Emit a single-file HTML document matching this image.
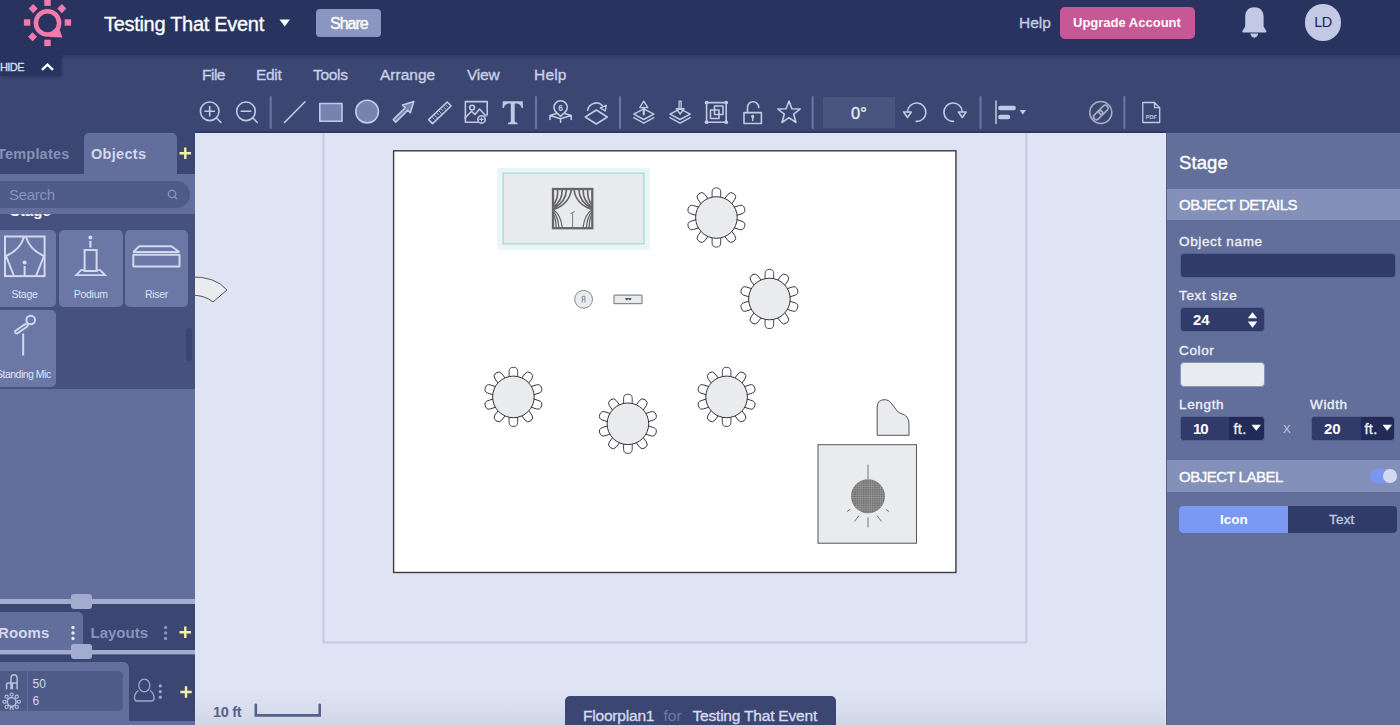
<!DOCTYPE html>
<html><head><meta charset="utf-8">
<style>
*{margin:0;padding:0;box-sizing:border-box}
html,body{width:1400px;height:725px;overflow:hidden;background:#dfe4f5;font-family:"Liberation Sans",sans-serif}
.a{position:absolute}
.t{position:absolute;white-space:nowrap;line-height:1}
.m{-webkit-text-stroke:0.35px currentColor}
#hdr{left:0;top:0;width:1400px;height:55px;background:#283360}
#tb{left:0;top:55px;width:1400px;height:78px;background:#3b4772}
#tbline{left:195px;top:131px;width:971px;height:2px;background:#2e3866}
#side{left:0;top:133px;width:195px;height:592px;background:#626e9b}
#canvas{left:195px;top:133px;width:970px;height:592px;background:#dfe4f5;overflow:hidden}
#rp{left:1166px;top:132.5px;width:234px;height:592.5px;background:#636f9b;border-left:1px solid #535e8c}
</style></head><body>
<div id="hdr" class="a"></div>

<!-- HEADER -->
<svg class="a" style="left:20px;top:0px" width="56" height="50" viewBox="20 0 56 50">
 <g fill="#f27ba9">
  <rect x="44.3" y="-0.5" width="6.4" height="6.4"/>
  <rect x="44.3" y="39.7" width="6.4" height="6.4"/>
  <rect x="23.9" y="19.3" width="6.4" height="6.4"/>
  <rect x="64.7" y="19.3" width="6.4" height="6.4"/>
  <rect x="30" y="5.4" width="6.4" height="6.4" transform="rotate(45 33.2 8.6)"/>
  <rect x="58.6" y="5.4" width="6.4" height="6.4" transform="rotate(45 61.8 8.6)"/>
  <rect x="29.3" y="33.6" width="6.4" height="6.4" transform="rotate(45 32.5 36.8)"/>
 </g>
 <circle cx="47.5" cy="22.9" r="11.6" fill="none" stroke="#f27ba9" stroke-width="4.6"/>
 <path d="M58.8 27.5 L62.5 37.5 L49.5 36.9 L49.5 32.6 L56.7 31.6 Z" fill="#f27ba9"/>
</svg>
<div class="t m" style="left:104px;top:14px;font-size:20px;color:#fff;letter-spacing:-0.3px">Testing That Event</div>
<svg class="a" style="left:279px;top:19px" width="12" height="8"><path d="M0.5 0.5 H11 L5.75 7.5Z" fill="#fff"/></svg>
<div class="a" style="left:316px;top:9px;width:65px;height:28px;border-radius:4px;background:#8b96c0"></div>
<div class="t m" style="left:330px;top:16px;font-size:16px;color:#fff;letter-spacing:-1px">Share</div>
<div class="t m" style="left:1019px;top:15px;font-size:15.5px;color:#c4cae6">Help</div>
<div class="a" style="left:1060px;top:7px;width:135px;height:32px;border-radius:5px;background:#c75896"></div>
<div class="t" style="left:1073px;top:16px;font-size:13px;font-weight:bold;color:#fff">Upgrade Account</div>
<svg class="a" style="left:1240px;top:5px" width="30" height="36" viewBox="1240 5 30 36">
 <path d="M1254.3 7.3 C1248 7.3 1245.2 11.5 1245.2 17 L1245.2 26.5 L1242.4 31 Q1242 32.6 1243.6 32.6 L1265.2 32.6 Q1266.8 32.6 1266.4 31 L1263.6 26.5 L1263.6 17 C1263.6 11.5 1260.6 7.3 1254.3 7.3Z" fill="#c3c9e4"/>
 <path d="M1250.4 33.6 Q1251 37.7 1254.3 37.7 Q1257.6 37.7 1258.2 33.6Z" fill="#c3c9e4"/>
</svg>
<div class="a" style="left:1304.6px;top:4.1px;width:36.8px;height:36.8px;border-radius:50%;background:#c3c9e4"></div>
<div class="t" style="left:1313px;top:15px;font-size:14.5px;color:#1e2654;width:20px;text-align:center;letter-spacing:-0.5px">LD</div>
<div id="tb" class="a"></div>
<div class="a" style="left:0;top:55px;width:1400px;height:4px;background:linear-gradient(#2f3a68,rgba(59,71,114,0))"></div>
<div id="tbline" class="a"></div>
<!-- TOOLBAR -->
<div class="a" style="left:0;top:54px;width:61px;height:22px;background:#283360;border-radius:0 0 3px 0;box-shadow:1px 1px 3px rgba(20,25,60,0.35)"></div>
<div class="t m" style="left:0px;top:62px;font-size:11px;color:#d6dbef;letter-spacing:-0.6px">HIDE</div>
<svg class="a" style="left:40px;top:62px" width="15" height="10"><path d="M2 7.8 L7.5 2.6 L13 7.8" fill="none" stroke="#fff" stroke-width="2.4"/></svg>
<div class="t m" style="left:202px;top:66.5px;font-size:15.5px;color:#c9cfe9;letter-spacing:-0.5px">File</div>
<div class="t m" style="left:256px;top:66.5px;font-size:15.5px;color:#c9cfe9;letter-spacing:-0.3px">Edit</div>
<div class="t m" style="left:313px;top:66.5px;font-size:15.5px;color:#c9cfe9;letter-spacing:-0.3px">Tools</div>
<div class="t m" style="left:380px;top:66.5px;font-size:15.5px;color:#c9cfe9">Arrange</div>
<div class="t m" style="left:467px;top:66.5px;font-size:15.5px;color:#c9cfe9;letter-spacing:-0.2px">View</div>
<div class="t m" style="left:534px;top:66.5px;font-size:15.5px;color:#c9cfe9;letter-spacing:0.2px">Help</div>
<svg class="a" style="left:0;top:90px" width="1165" height="42" viewBox="0 90 1165 42">
 <g fill="none" stroke="#c3c9e4" stroke-width="1.6" stroke-linecap="round" stroke-linejoin="round">
  <!-- zoom in -->
  <circle cx="209.7" cy="111.3" r="9.3"/><path d="M216.5 118 L221 122.5 M205 111.3 H214.4 M209.7 106.6 V116"/>
  <!-- zoom out -->
  <circle cx="246" cy="111.3" r="9.3"/><path d="M252.8 118 L257.3 122.5 M241.3 111.3 H250.7"/>
  <!-- line -->
  <path d="M284.5 122.5 L305 101.8"/>
  <!-- rect -->
  <rect x="319.8" y="103.5" width="22.2" height="17.7" fill="#7682b0"/>
  <!-- circle -->
  <circle cx="367.1" cy="111.6" r="11.3" fill="#7682b0"/>
  <!-- arrow -->
  <path d="M393.3 119.6 L405.2 107.7 L402.6 105.1 L413.8 101.6 L410.3 112.8 L407.7 110.2 L395.8 122.1 Z" fill="#7682b0"/>
  <!-- ruler -->
  <path d="M428.6 119.6 L447.2 102 L451.1 106 L432.5 123.6 Z"/>
  <path d="M432.6 117.5 l1.5 1.5 M434.8 115.4 l2.3 2.3 M437 113.3 l1.5 1.5 M439.2 111.2 l2.3 2.3 M441.4 109.1 l1.5 1.5 M443.6 107 l2.3 2.3 M445.8 104.9 l1.5 1.5" stroke-width="1"/>
  <!-- image -->
  <path d="M478 122.3 H465.4 V101.6 H487.2 V115"/>
  <circle cx="472.1" cy="107.6" r="2.4"/>
  <path d="M465 118 L471.5 111.3 L475 114.5 L479.5 109 L486 116"/>
  <circle cx="481.5" cy="119.4" r="3.7"/>
  <path d="M479.8 119.4 H483.2 M481.5 117.7 V121.1" stroke-width="1.1"/>
  <!-- separators -->
  <path d="M270.7 97 V128 M536 97 V128 M620 97 V128 M812.7 97 V128 M980.5 97 V128 M1124.4 97 V128" stroke="#6a76a4" stroke-width="2"/>
  <!-- pin -->
  <path d="M556.5 112.5 A6.6 6.6 0 1 1 564.7 112.5 L560.6 116.3 Z"/>
  <path d="M550 119.5 V115.6 L556.5 113.6 M571.2 119.5 V115.6 L564.7 113.6 M550 115.6 L560.6 118.8 L571.2 115.6 M560.6 118.8 V122.3"/>
  <!-- rotate plane -->
  <path d="M585.3 117 L596.3 110 L607.3 117 L596.3 124 Z"/>
  <path d="M587.7 110.3 A8.6 8.6 0 0 1 602.3 105.5"/>
  <path d="M600.3 107.9 L606.2 105.3 L605.2 111 Z" stroke-width="1.4"/>
  <!-- layer up -->
  <path d="M633.8 114.2 L643.8 108.9 L653.9 114.2 L643.8 119.5 Z M633.8 117.7 L643.8 123.2 L653.9 117.7" stroke-width="1.5"/>
  <path d="M643.8 114.3 V107.8" stroke-width="2.2"/>
  <path d="M639.8 107.6 L643.8 101.2 L647.8 107.6 Z" stroke-width="1.4"/>
  <!-- layer down -->
  <path d="M670 114.2 L680.1 108.9 L690.2 114.2 L680.1 119.5 Z M670 117.7 L680.1 123.2 L690.2 117.7" stroke-width="1.5"/>
  <path d="M679.1 108.5 V101.2 H681.1 V108.5" stroke-width="1.3"/>
  <path d="M676.2 108.7 L680.1 114 L684.1 108.7 Z" stroke-width="1.4"/>
  <!-- group -->
  <rect x="706.6" y="102.6" width="19.6" height="19.6"/>
  <rect x="710.5" y="110" width="8.5" height="8.5"/><rect x="714.5" y="106" width="8.5" height="8.5"/>
  <!-- lock -->
  <rect x="744" y="112.6" width="17.4" height="10.9"/>
  <path d="M747.5 112.6 V107.4 A5.6 5.6 0 0 1 758.7 107.4"/>
  <path d="M752.7 117 V120.6" stroke-width="1.5"/>
  <!-- star -->
  <path d="M789 101 L791.9 108.8 L800.2 109 L793.7 114.2 L796 122.5 L789 117.7 L782 122.5 L784.3 114.2 L777.8 109 L786.1 108.8 Z"/>
  <!-- rotate l -->
  <path d="M907.5 112 A9.2 9.2 0 1 1 916.2 121.4"/>
  <path d="M903.6 112 L911.3 112 L907.5 117.5 Z"/>
  <!-- rotate r -->
  <path d="M962.3 112 A9.2 9.2 0 1 0 953.6 121.4"/>
  <path d="M958.4 112 L966.1 112 L962.3 117.5 Z"/>
  <!-- align -->
  <path d="M996 101 V123.5" stroke-width="1.5"/>
  <!-- link -->
  <circle cx="1100.8" cy="112.5" r="11" stroke="#a9aec2" stroke-width="1.5"/>
  <!-- pdf -->
  <path d="M1142.8 102.5 H1154.5 L1159.7 107.7 V122.5 H1142.8 Z M1154.5 102.5 V107.7 H1159.7" stroke-width="1.3"/>
 </g>
 <g fill="#c3c9e4">
  <circle cx="752.7" cy="116.4" r="1.6"/><circle cx="706.6" cy="102.6" r="1.9"/><circle cx="726.2" cy="102.6" r="1.9"/><circle cx="706.6" cy="122.2" r="1.9"/><circle cx="726.2" cy="122.2" r="1.9"/>
  <rect x="998.2" y="105.7" width="17.6" height="4.6" rx="2"/>
  <rect x="998.2" y="114.7" width="12" height="4.6" rx="2"/>
  <path d="M1019.6 110 H1026 L1022.8 114.4 Z"/>
  <path d="M502.8 101.3 H522.7 L523 108 L521.8 108 Q520.5 103.7 516.5 103.5 L514.7 103.5 V121.2 Q514.7 122.5 517.5 122.7 V124.2 H508 V122.7 Q510.8 122.5 510.8 121.2 V103.5 L509 103.5 Q505 103.7 503.7 108 L502.5 108 Z"/>
  <text x="560.6" y="111.2" font-size="8.5" font-weight="bold" text-anchor="middle" font-family="Liberation Sans" fill="#c3c9e4">6</text>
  <text x="1151.3" y="118.7" font-size="5.5" font-weight="bold" text-anchor="middle" font-family="Liberation Sans" fill="#c3c9e4">PDF</text>
 </g>
 <g fill="none" stroke="#a9aec2" stroke-width="1.6" transform="rotate(-45 1100.8 112.5)">
  <rect x="1091.8" y="109.7" width="10.5" height="5.6" rx="2.8"/>
  <rect x="1099.3" y="109.7" width="10.5" height="5.6" rx="2.8"/>
 </g>
</svg>
<div class="a" style="left:823px;top:97px;width:72px;height:31px;background:#4a557f"></div>
<div class="t m" style="left:823px;top:104px;width:72px;text-align:center;font-size:16.5px;color:#e5e8f5;padding-top:1px">0°</div>

<div id="side" class="a"></div>

<!-- SIDEBAR -->
<div class="a" style="left:0;top:133px;width:195px;height:41px;background:#3b4672"></div>
<div class="a" style="left:84px;top:133px;width:93px;height:41px;background:#626e9b;border-radius:5px 5px 0 0"></div>
<div class="t" style="left:-3px;top:147px;font-size:14.5px;font-weight:bold;color:#8791b8;letter-spacing:0.2px">Templates</div>
<div class="t" style="left:91px;top:147px;font-size:14.5px;font-weight:bold;color:#d3d8ee;letter-spacing:0.3px">Objects</div>
<svg class="a" style="left:179px;top:147px" width="13" height="13"><path d="M6.3 0.5 V12 M0.5 6.3 H12" stroke="#f5f0a0" stroke-width="2.4"/></svg>
<div class="a" style="left:-12px;top:180.7px;width:202px;height:27px;border-radius:13.5px;background:#4e5a87"></div>
<div class="t" style="left:9px;top:187px;font-size:15px;color:#8a94bb;letter-spacing:-0.3px">Search</div>
<svg class="a" style="left:166px;top:188px" width="13" height="13"><circle cx="6" cy="6" r="3.7" fill="none" stroke="#8a94bb" stroke-width="1.4"/><path d="M8.7 8.7 L11 11" stroke="#8a94bb" stroke-width="1.6"/></svg>
<div class="a" style="left:0;top:214.4px;width:195px;height:174.2px;background:#46517e;overflow:hidden">
 <div class="t" style="left:10px;top:-11.5px;font-size:15px;font-weight:bold;color:#fff">Stage</div>
 <div class="a" style="left:0;top:15.6px;width:56.4px;height:77px;background:#6b78a6;border-radius:0 5px 5px 0"></div>
 <div class="a" style="left:58.9px;top:15.6px;width:63.7px;height:77px;background:#6b78a6;border-radius:5px"></div>
 <div class="a" style="left:124.7px;top:15.6px;width:63.5px;height:77px;background:#6b78a6;border-radius:5px"></div>
 <div class="a" style="left:0;top:95.6px;width:56.4px;height:77px;background:#6b78a6;border-radius:0 5px 5px 0"></div>
 <div class="a" style="left:186px;top:113.5px;width:6px;height:33px;background:#3b4570;border-radius:3px"></div>
</div>
<div class="t" style="left:0;top:289px;width:49px;text-align:center;font-size:10.5px;color:#dde1f2;letter-spacing:-0.3px">Stage</div>
<div class="t" style="left:58.9px;top:289px;width:63.7px;text-align:center;font-size:10.5px;color:#dde1f2;letter-spacing:-0.3px">Podium</div>
<div class="t" style="left:124.7px;top:289px;width:63.5px;text-align:center;font-size:10.5px;color:#dde1f2;letter-spacing:-0.3px">Riser</div>
<div class="t" style="left:-4px;top:369px;font-size:10.5px;color:#dde1f2;letter-spacing:-0.5px">Standing Mic</div>
<svg class="a" style="left:0;top:225px" width="195" height="140" viewBox="0 225 195 140">
 <g fill="none" stroke="#d3d8ee" stroke-width="2">
  <rect x="5" y="236.5" width="39.6" height="39.6"/>
  <path d="M24 237 Q20 250 6 256 L14 276 M26 237 Q30 250 44 256 L36 276"/>
  <path d="M24.6 266 V276"/>
  <path d="M90.4 240.8 V247.5" stroke-width="2.2"/>
  <rect x="84.6" y="250" width="12" height="21" stroke-width="2"/>
  <path d="M84.6 270.2 H81 L76.2 275.2 H105 L100.2 270.2 H96.6" stroke-width="1.8"/>
  <path d="M133.3 254.8 H179.5 V266.4 H133.3 Z M133.3 252 L139.3 246.3 H171.4 L179.3 252 Z" stroke-linejoin="bevel"/>
  <circle cx="30.7" cy="320" r="4.3"/>
  <path d="M14.5 331.5 L26 323.5 M16.5 334 L28 326 M14.5 331.5 L16.5 334 M28 326 L26.5 323.8"/>
  <path d="M23.2 333.5 V355.5"/>
 </g>
 <circle cx="90.4" cy="237.6" r="2" fill="#d3d8ee"/>
 <circle cx="24.6" cy="262.5" r="2" fill="#d3d8ee"/>
 
</svg>
<!-- lower sidebar -->
<div class="a" style="left:0;top:599px;width:195px;height:5.3px;background:#a3acd0"></div>
<div class="a" style="left:0;top:604.3px;width:195px;height:45.4px;background:#3b4672"></div>
<div class="a" style="left:-5px;top:612px;width:88.4px;height:37.7px;background:#626e9b;border-radius:5px 5px 0 0"></div>
<div class="a" style="left:71.4px;top:593.7px;width:20.3px;height:14.9px;background:#a3acd0;border-radius:3px"></div>
<div class="t" style="left:-2px;top:624.5px;font-size:15px;font-weight:bold;color:#d3d8ee;letter-spacing:0.1px">Rooms</div>
<div class="t" style="left:90.5px;top:624.5px;font-size:15px;font-weight:bold;color:#8a94bb;letter-spacing:0px">Layouts</div>
<svg class="a" style="left:68px;top:624px" width="100" height="20"><g fill="#e3e6f4"><circle cx="5" cy="3.5" r="1.7"/><circle cx="5" cy="9" r="1.7"/><circle cx="5" cy="14.5" r="1.7"/></g><g fill="#8a94bb"><circle cx="97.6" cy="3.5" r="1.7"/><circle cx="97.6" cy="9" r="1.7"/><circle cx="97.6" cy="14.5" r="1.7"/></g></svg>
<svg class="a" style="left:179px;top:626px" width="13" height="13"><path d="M6.3 0.5 V12 M0.5 6.3 H12" stroke="#f5f0a0" stroke-width="2.4"/></svg>
<div class="a" style="left:0;top:649.7px;width:195px;height:4.8px;background:#a3acd0"></div>
<div class="a" style="left:0;top:654.5px;width:195px;height:66.2px;background:#3b4672"></div>
<div class="a" style="left:0;top:720.7px;width:195px;height:5px;background:#626e9b"></div>
<div class="a" style="left:71.4px;top:643.9px;width:20.3px;height:14.8px;background:#a3acd0;border-radius:3px"></div>
<div class="a" style="left:-6px;top:662.1px;width:135.3px;height:70px;background:#626e9b;border-radius:6px"></div>
<div class="a" style="left:-6px;top:671.4px;width:129.1px;height:40px;background:#4e5a87;border-radius:5px"></div>
<div class="a" style="left:27.1px;top:671.4px;width:1px;height:40px;background:#626e9b"></div>
<div class="t" style="left:32.5px;top:677.5px;font-size:12px;color:#d3d8ee">50</div>
<div class="t" style="left:32.5px;top:694.5px;font-size:12px;color:#d3d8ee">6</div>
<svg class="a" style="left:0;top:670px" width="195" height="40" viewBox="0 670 195 40">
 <g fill="none" stroke="#b9c0de" stroke-width="1.2">
  <path d="M11 689.2 V678.5 Q11 674.8 14.05 674.8 Q17.1 674.8 17.1 678.5 V689.2 M6.6 689.2 V684.5 Q6.6 683 8.1 683 H17.1 M12.3 683 V689.2" stroke-width="1.5"/>
  <circle cx="11.7" cy="701.8" r="4.4" stroke-width="1.5"/>
 </g>
 <g fill="none" stroke="#b9c0de" stroke-width="1.1">
  <circle cx="11.7" cy="694.6" r="1.6"/><circle cx="11.7" cy="709" r="1.6"/>
  <circle cx="4.5" cy="701.8" r="1.6"/><circle cx="18.9" cy="701.8" r="1.6"/>
  <circle cx="6.6" cy="696.7" r="1.6"/><circle cx="16.8" cy="696.7" r="1.6"/>
  <circle cx="6.6" cy="706.9" r="1.6"/><circle cx="16.8" cy="706.9" r="1.6"/>
 </g>
 <g fill="none" stroke="#9ea6cb" stroke-width="1.3">
  <ellipse cx="144.3" cy="685.5" rx="5.5" ry="6.3"/>
  <path d="M138.5 690.5 Q134.5 693 134.5 698 Q134.5 701 137 701 H151.5 Q154 701 154 698 Q154 693 150 690.5"/>
 </g>
 <g fill="#9ea6cb"><circle cx="160.3" cy="685.9" r="1.6"/><circle cx="160.3" cy="691.6" r="1.6"/><circle cx="160.3" cy="697.2" r="1.6"/></g>
</svg>
<svg class="a" style="left:180px;top:685.5px" width="13" height="13"><path d="M6 0.3 V11.7 M0.3 6 H11.7" stroke="#f5f0a0" stroke-width="2.4"/></svg>
<div id="canvas" class="a"></div>

<!-- CANVAS -->
<svg class="a" style="left:195px;top:133px" width="970" height="592" viewBox="195 133 970 592">
 <defs>
  <pattern id="grid" width="2.2" height="2.2" patternUnits="userSpaceOnUse"><rect width="2.3" height="2.3" fill="#737373"/><path d="M0 0 H2.3 M0 0 V2.3" stroke="#adadad" stroke-width="0.7"/></pattern>
  <linearGradient id="btm" x1="0" y1="0" x2="0" y2="1"><stop offset="0" stop-color="#dfe4f5" stop-opacity="0"/><stop offset="1" stop-color="#d0d5e6" stop-opacity="1"/></linearGradient>
 </defs>
 <rect x="195" y="680" width="971" height="45" fill="url(#btm)"/>
 <path d="M323.5 120 V642.5 H1026.3 V120" fill="none" stroke="#c3cae5" stroke-width="2"/>
 <path d="M190 277 Q215 276 227 290 L213 301.9 Q205 295 190 295 Z" fill="#e9ebee" stroke="#444" stroke-width="0.9"/>
 <rect x="393.6" y="150.8" width="562.3" height="421.7" fill="#fff" stroke="#3a3a3a" stroke-width="1.4"/>
 <rect x="497.2" y="167.9" width="152.7" height="81.9" fill="#eaf6f5"/>
 <rect x="503.1" y="173.1" width="140.9" height="70.8" fill="#e8eaed" stroke="#9fdcd3" stroke-width="1.2"/>
 <g fill="none" stroke="#666" stroke-width="1.7">
  <rect x="553" y="189" width="39.3" height="39.2" stroke-width="2.3"/>
  <path d="M571.3 189.5 Q569.5 204 553.5 209.5 M566.5 189.5 Q566 202 553.5 208.5 M562.2 189.5 Q562.5 200.5 553.5 207 M557.6 189.5 Q558.3 199 553.5 204.5"/>
  <path d="M574 189.5 Q575.8 204 591.8 209.5 M578.8 189.5 Q579.3 202 591.8 208.5 M583.1 189.5 Q582.8 200.5 591.8 207 M587.7 189.5 Q587 199 591.8 204.5"/>
  <path d="M553.5 210 Q560.5 214 562.4 228 M553.5 212 Q557.8 216 559 228 M553.5 214.5 Q555.8 218 556.2 228" stroke-width="1.3"/>
  <path d="M591.8 210 Q584.8 214 582.9 228 M591.8 212 Q587.5 216 586.3 228 M591.8 214.5 Q589.5 218 589.1 228" stroke-width="1.3"/>
  <path d="M572.6 228 V213.4 M570.4 213.8 L574.8 211.4" stroke-width="1" stroke="#7a7a7a"/>
 </g>
 <circle cx="583.6" cy="299.3" r="8.9" fill="#e8ecf0" stroke="#888" stroke-width="1"/>
 <path d="M582.3 302.5 V296.3 H584.9 V302.5 M582.3 299.3 H584.9" fill="none" stroke="#777" stroke-width="0.8"/>
 <rect x="614" y="295.2" width="28" height="8.5" rx="0.8" fill="#e8ecf0" stroke="#888" stroke-width="1.2"/>
 <path d="M625 298 H631.5 L630.5 300.3 H629 L628.2 298.6 L627.5 300.3 H626 Z" fill="#555"/>
 <g transform="translate(716.4 217.5) rotate(0)"><path d="M-4.3 -18 V-25.5 Q-4.3 -29.6 0 -29.6 Q4.3 -29.6 4.3 -25.5 V-18 Z" fill="#fff" stroke="#333" stroke-width="0.9"/></g>
<g transform="translate(716.4 217.5) rotate(36)"><path d="M-4.3 -18 V-25.5 Q-4.3 -29.6 0 -29.6 Q4.3 -29.6 4.3 -25.5 V-18 Z" fill="#fff" stroke="#333" stroke-width="0.9"/></g>
<g transform="translate(716.4 217.5) rotate(72)"><path d="M-4.3 -18 V-25.5 Q-4.3 -29.6 0 -29.6 Q4.3 -29.6 4.3 -25.5 V-18 Z" fill="#fff" stroke="#333" stroke-width="0.9"/></g>
<g transform="translate(716.4 217.5) rotate(108)"><path d="M-4.3 -18 V-25.5 Q-4.3 -29.6 0 -29.6 Q4.3 -29.6 4.3 -25.5 V-18 Z" fill="#fff" stroke="#333" stroke-width="0.9"/></g>
<g transform="translate(716.4 217.5) rotate(144)"><path d="M-4.3 -18 V-25.5 Q-4.3 -29.6 0 -29.6 Q4.3 -29.6 4.3 -25.5 V-18 Z" fill="#fff" stroke="#333" stroke-width="0.9"/></g>
<g transform="translate(716.4 217.5) rotate(180)"><path d="M-4.3 -18 V-25.5 Q-4.3 -29.6 0 -29.6 Q4.3 -29.6 4.3 -25.5 V-18 Z" fill="#fff" stroke="#333" stroke-width="0.9"/></g>
<g transform="translate(716.4 217.5) rotate(216)"><path d="M-4.3 -18 V-25.5 Q-4.3 -29.6 0 -29.6 Q4.3 -29.6 4.3 -25.5 V-18 Z" fill="#fff" stroke="#333" stroke-width="0.9"/></g>
<g transform="translate(716.4 217.5) rotate(252)"><path d="M-4.3 -18 V-25.5 Q-4.3 -29.6 0 -29.6 Q4.3 -29.6 4.3 -25.5 V-18 Z" fill="#fff" stroke="#333" stroke-width="0.9"/></g>
<g transform="translate(716.4 217.5) rotate(288)"><path d="M-4.3 -18 V-25.5 Q-4.3 -29.6 0 -29.6 Q4.3 -29.6 4.3 -25.5 V-18 Z" fill="#fff" stroke="#333" stroke-width="0.9"/></g>
<g transform="translate(716.4 217.5) rotate(324)"><path d="M-4.3 -18 V-25.5 Q-4.3 -29.6 0 -29.6 Q4.3 -29.6 4.3 -25.5 V-18 Z" fill="#fff" stroke="#333" stroke-width="0.9"/></g>
<circle cx="716.4" cy="217.5" r="20.8" fill="#e9ebee" stroke="#333" stroke-width="1"/>
<g transform="translate(769.4 299) rotate(0)"><path d="M-4.3 -18 V-25.5 Q-4.3 -29.6 0 -29.6 Q4.3 -29.6 4.3 -25.5 V-18 Z" fill="#fff" stroke="#333" stroke-width="0.9"/></g>
<g transform="translate(769.4 299) rotate(36)"><path d="M-4.3 -18 V-25.5 Q-4.3 -29.6 0 -29.6 Q4.3 -29.6 4.3 -25.5 V-18 Z" fill="#fff" stroke="#333" stroke-width="0.9"/></g>
<g transform="translate(769.4 299) rotate(72)"><path d="M-4.3 -18 V-25.5 Q-4.3 -29.6 0 -29.6 Q4.3 -29.6 4.3 -25.5 V-18 Z" fill="#fff" stroke="#333" stroke-width="0.9"/></g>
<g transform="translate(769.4 299) rotate(108)"><path d="M-4.3 -18 V-25.5 Q-4.3 -29.6 0 -29.6 Q4.3 -29.6 4.3 -25.5 V-18 Z" fill="#fff" stroke="#333" stroke-width="0.9"/></g>
<g transform="translate(769.4 299) rotate(144)"><path d="M-4.3 -18 V-25.5 Q-4.3 -29.6 0 -29.6 Q4.3 -29.6 4.3 -25.5 V-18 Z" fill="#fff" stroke="#333" stroke-width="0.9"/></g>
<g transform="translate(769.4 299) rotate(180)"><path d="M-4.3 -18 V-25.5 Q-4.3 -29.6 0 -29.6 Q4.3 -29.6 4.3 -25.5 V-18 Z" fill="#fff" stroke="#333" stroke-width="0.9"/></g>
<g transform="translate(769.4 299) rotate(216)"><path d="M-4.3 -18 V-25.5 Q-4.3 -29.6 0 -29.6 Q4.3 -29.6 4.3 -25.5 V-18 Z" fill="#fff" stroke="#333" stroke-width="0.9"/></g>
<g transform="translate(769.4 299) rotate(252)"><path d="M-4.3 -18 V-25.5 Q-4.3 -29.6 0 -29.6 Q4.3 -29.6 4.3 -25.5 V-18 Z" fill="#fff" stroke="#333" stroke-width="0.9"/></g>
<g transform="translate(769.4 299) rotate(288)"><path d="M-4.3 -18 V-25.5 Q-4.3 -29.6 0 -29.6 Q4.3 -29.6 4.3 -25.5 V-18 Z" fill="#fff" stroke="#333" stroke-width="0.9"/></g>
<g transform="translate(769.4 299) rotate(324)"><path d="M-4.3 -18 V-25.5 Q-4.3 -29.6 0 -29.6 Q4.3 -29.6 4.3 -25.5 V-18 Z" fill="#fff" stroke="#333" stroke-width="0.9"/></g>
<circle cx="769.4" cy="299" r="20.8" fill="#e9ebee" stroke="#333" stroke-width="1"/>
<g transform="translate(513.4 396.9) rotate(0)"><path d="M-4.3 -18 V-25.5 Q-4.3 -29.6 0 -29.6 Q4.3 -29.6 4.3 -25.5 V-18 Z" fill="#fff" stroke="#333" stroke-width="0.9"/></g>
<g transform="translate(513.4 396.9) rotate(36)"><path d="M-4.3 -18 V-25.5 Q-4.3 -29.6 0 -29.6 Q4.3 -29.6 4.3 -25.5 V-18 Z" fill="#fff" stroke="#333" stroke-width="0.9"/></g>
<g transform="translate(513.4 396.9) rotate(72)"><path d="M-4.3 -18 V-25.5 Q-4.3 -29.6 0 -29.6 Q4.3 -29.6 4.3 -25.5 V-18 Z" fill="#fff" stroke="#333" stroke-width="0.9"/></g>
<g transform="translate(513.4 396.9) rotate(108)"><path d="M-4.3 -18 V-25.5 Q-4.3 -29.6 0 -29.6 Q4.3 -29.6 4.3 -25.5 V-18 Z" fill="#fff" stroke="#333" stroke-width="0.9"/></g>
<g transform="translate(513.4 396.9) rotate(144)"><path d="M-4.3 -18 V-25.5 Q-4.3 -29.6 0 -29.6 Q4.3 -29.6 4.3 -25.5 V-18 Z" fill="#fff" stroke="#333" stroke-width="0.9"/></g>
<g transform="translate(513.4 396.9) rotate(180)"><path d="M-4.3 -18 V-25.5 Q-4.3 -29.6 0 -29.6 Q4.3 -29.6 4.3 -25.5 V-18 Z" fill="#fff" stroke="#333" stroke-width="0.9"/></g>
<g transform="translate(513.4 396.9) rotate(216)"><path d="M-4.3 -18 V-25.5 Q-4.3 -29.6 0 -29.6 Q4.3 -29.6 4.3 -25.5 V-18 Z" fill="#fff" stroke="#333" stroke-width="0.9"/></g>
<g transform="translate(513.4 396.9) rotate(252)"><path d="M-4.3 -18 V-25.5 Q-4.3 -29.6 0 -29.6 Q4.3 -29.6 4.3 -25.5 V-18 Z" fill="#fff" stroke="#333" stroke-width="0.9"/></g>
<g transform="translate(513.4 396.9) rotate(288)"><path d="M-4.3 -18 V-25.5 Q-4.3 -29.6 0 -29.6 Q4.3 -29.6 4.3 -25.5 V-18 Z" fill="#fff" stroke="#333" stroke-width="0.9"/></g>
<g transform="translate(513.4 396.9) rotate(324)"><path d="M-4.3 -18 V-25.5 Q-4.3 -29.6 0 -29.6 Q4.3 -29.6 4.3 -25.5 V-18 Z" fill="#fff" stroke="#333" stroke-width="0.9"/></g>
<circle cx="513.4" cy="396.9" r="20.8" fill="#e9ebee" stroke="#333" stroke-width="1"/>
<g transform="translate(627.9 423.8) rotate(0)"><path d="M-4.3 -18 V-25.5 Q-4.3 -29.6 0 -29.6 Q4.3 -29.6 4.3 -25.5 V-18 Z" fill="#fff" stroke="#333" stroke-width="0.9"/></g>
<g transform="translate(627.9 423.8) rotate(36)"><path d="M-4.3 -18 V-25.5 Q-4.3 -29.6 0 -29.6 Q4.3 -29.6 4.3 -25.5 V-18 Z" fill="#fff" stroke="#333" stroke-width="0.9"/></g>
<g transform="translate(627.9 423.8) rotate(72)"><path d="M-4.3 -18 V-25.5 Q-4.3 -29.6 0 -29.6 Q4.3 -29.6 4.3 -25.5 V-18 Z" fill="#fff" stroke="#333" stroke-width="0.9"/></g>
<g transform="translate(627.9 423.8) rotate(108)"><path d="M-4.3 -18 V-25.5 Q-4.3 -29.6 0 -29.6 Q4.3 -29.6 4.3 -25.5 V-18 Z" fill="#fff" stroke="#333" stroke-width="0.9"/></g>
<g transform="translate(627.9 423.8) rotate(144)"><path d="M-4.3 -18 V-25.5 Q-4.3 -29.6 0 -29.6 Q4.3 -29.6 4.3 -25.5 V-18 Z" fill="#fff" stroke="#333" stroke-width="0.9"/></g>
<g transform="translate(627.9 423.8) rotate(180)"><path d="M-4.3 -18 V-25.5 Q-4.3 -29.6 0 -29.6 Q4.3 -29.6 4.3 -25.5 V-18 Z" fill="#fff" stroke="#333" stroke-width="0.9"/></g>
<g transform="translate(627.9 423.8) rotate(216)"><path d="M-4.3 -18 V-25.5 Q-4.3 -29.6 0 -29.6 Q4.3 -29.6 4.3 -25.5 V-18 Z" fill="#fff" stroke="#333" stroke-width="0.9"/></g>
<g transform="translate(627.9 423.8) rotate(252)"><path d="M-4.3 -18 V-25.5 Q-4.3 -29.6 0 -29.6 Q4.3 -29.6 4.3 -25.5 V-18 Z" fill="#fff" stroke="#333" stroke-width="0.9"/></g>
<g transform="translate(627.9 423.8) rotate(288)"><path d="M-4.3 -18 V-25.5 Q-4.3 -29.6 0 -29.6 Q4.3 -29.6 4.3 -25.5 V-18 Z" fill="#fff" stroke="#333" stroke-width="0.9"/></g>
<g transform="translate(627.9 423.8) rotate(324)"><path d="M-4.3 -18 V-25.5 Q-4.3 -29.6 0 -29.6 Q4.3 -29.6 4.3 -25.5 V-18 Z" fill="#fff" stroke="#333" stroke-width="0.9"/></g>
<circle cx="627.9" cy="423.8" r="20.8" fill="#e9ebee" stroke="#333" stroke-width="1"/>
<g transform="translate(726.6 396.9) rotate(0)"><path d="M-4.3 -18 V-25.5 Q-4.3 -29.6 0 -29.6 Q4.3 -29.6 4.3 -25.5 V-18 Z" fill="#fff" stroke="#333" stroke-width="0.9"/></g>
<g transform="translate(726.6 396.9) rotate(36)"><path d="M-4.3 -18 V-25.5 Q-4.3 -29.6 0 -29.6 Q4.3 -29.6 4.3 -25.5 V-18 Z" fill="#fff" stroke="#333" stroke-width="0.9"/></g>
<g transform="translate(726.6 396.9) rotate(72)"><path d="M-4.3 -18 V-25.5 Q-4.3 -29.6 0 -29.6 Q4.3 -29.6 4.3 -25.5 V-18 Z" fill="#fff" stroke="#333" stroke-width="0.9"/></g>
<g transform="translate(726.6 396.9) rotate(108)"><path d="M-4.3 -18 V-25.5 Q-4.3 -29.6 0 -29.6 Q4.3 -29.6 4.3 -25.5 V-18 Z" fill="#fff" stroke="#333" stroke-width="0.9"/></g>
<g transform="translate(726.6 396.9) rotate(144)"><path d="M-4.3 -18 V-25.5 Q-4.3 -29.6 0 -29.6 Q4.3 -29.6 4.3 -25.5 V-18 Z" fill="#fff" stroke="#333" stroke-width="0.9"/></g>
<g transform="translate(726.6 396.9) rotate(180)"><path d="M-4.3 -18 V-25.5 Q-4.3 -29.6 0 -29.6 Q4.3 -29.6 4.3 -25.5 V-18 Z" fill="#fff" stroke="#333" stroke-width="0.9"/></g>
<g transform="translate(726.6 396.9) rotate(216)"><path d="M-4.3 -18 V-25.5 Q-4.3 -29.6 0 -29.6 Q4.3 -29.6 4.3 -25.5 V-18 Z" fill="#fff" stroke="#333" stroke-width="0.9"/></g>
<g transform="translate(726.6 396.9) rotate(252)"><path d="M-4.3 -18 V-25.5 Q-4.3 -29.6 0 -29.6 Q4.3 -29.6 4.3 -25.5 V-18 Z" fill="#fff" stroke="#333" stroke-width="0.9"/></g>
<g transform="translate(726.6 396.9) rotate(288)"><path d="M-4.3 -18 V-25.5 Q-4.3 -29.6 0 -29.6 Q4.3 -29.6 4.3 -25.5 V-18 Z" fill="#fff" stroke="#333" stroke-width="0.9"/></g>
<g transform="translate(726.6 396.9) rotate(324)"><path d="M-4.3 -18 V-25.5 Q-4.3 -29.6 0 -29.6 Q4.3 -29.6 4.3 -25.5 V-18 Z" fill="#fff" stroke="#333" stroke-width="0.9"/></g>
<circle cx="726.6" cy="396.9" r="20.8" fill="#e9ebee" stroke="#333" stroke-width="1"/>
 <path d="M877.2 435.3 V407 Q877.2 399.6 885 399.6 Q889 399.6 892 404 L897.5 411.5 Q899 413 901 413.5 Q909 415.5 909 424 V435.3 Z" fill="#e9ebee" stroke="#555" stroke-width="1"/>
 <rect x="818" y="444.7" width="98.5" height="98.5" fill="#e9ebee" stroke="#555" stroke-width="1"/>
 <path d="M868 464.5 V479" stroke="#777" stroke-width="1"/>
 <circle cx="868" cy="496.2" r="17" fill="url(#grid)"/>
 <g stroke="#777" stroke-width="1">
  <path d="M868 517.5 V527.5 M859 515.5 L854.5 521.5 M877 515.5 L881.5 521.5 M850 509.5 L847 511.5 M886 509.5 L889 511.5"/>
 </g>
</svg>
<div id="rp" class="a"></div>

<!-- RIGHT PANEL -->
<div class="t m" style="left:1179px;top:154px;font-size:18.5px;color:#fff;letter-spacing:0.1px">Stage</div>
<div class="a" style="left:1167px;top:188.5px;width:233px;height:31.2px;background:#8390b9"></div>
<div class="t m" style="left:1179px;top:196.5px;font-size:15px;color:#fff;letter-spacing:-0.45px">OBJECT DETAILS</div>
<div class="t m" style="left:1179px;top:234.5px;font-size:13.5px;color:#eef0f8;letter-spacing:0.65px">Object name</div>
<div class="a" style="left:1180px;top:252.7px;width:216px;height:25.2px;background:#313b6a;border:1px solid #56628f;border-radius:4px"></div>
<div class="t m" style="left:1179px;top:289px;font-size:13.5px;color:#eef0f8;letter-spacing:0.65px">Text size</div>
<div class="a" style="left:1180px;top:307.3px;width:85.4px;height:24.8px;background:#313b6a;border:1px solid #56628f;border-radius:4px"></div>
<div class="t" style="left:1193px;top:311.5px;font-size:15px;font-weight:bold;color:#fff">24</div>
<svg class="a" style="left:1246px;top:311px" width="13" height="18"><path d="M1.8 7.2 L6.5 1.3 L11.2 7.2Z M1.8 10.5 H11.2 L6.5 16.7Z" fill="#fff"/></svg>
<div class="t m" style="left:1179px;top:343.5px;font-size:13.5px;color:#eef0f8;letter-spacing:0.65px">Color</div>
<div class="a" style="left:1180px;top:361.5px;width:85.4px;height:25.2px;background:#e8ebef;border:1px solid #8a95bd;border-radius:4px"></div>
<div class="t m" style="left:1179px;top:398px;font-size:13.5px;color:#eef0f8;letter-spacing:0.65px">Length</div>
<div class="t m" style="left:1310px;top:398px;font-size:13.5px;color:#eef0f8;letter-spacing:0.65px">Width</div>
<div class="a" style="left:1180px;top:416.4px;width:85.4px;height:24.4px;background:#222a58;border:1px solid #56628f;border-radius:4px;overflow:hidden"><div class="a" style="left:0;top:0;width:48px;height:24px;background:#313b6a"></div></div>
<div class="a" style="left:1310.7px;top:416.4px;width:84.6px;height:24.4px;background:#222a58;border:1px solid #56628f;border-radius:4px;overflow:hidden"><div class="a" style="left:0;top:0;width:49px;height:24px;background:#313b6a"></div></div>
<div class="t" style="left:1193px;top:421px;font-size:15px;font-weight:bold;color:#fff;letter-spacing:-1.2px">10</div>
<div class="t" style="left:1324px;top:421px;font-size:15px;font-weight:bold;color:#fff">20</div>
<div class="t m" style="left:1233.5px;top:422px;font-size:14.5px;color:#eef0f8;letter-spacing:0.3px">ft.</div>
<div class="t" style="left:1364.5px;top:422px;font-size:14.5px;color:#eef0f8;letter-spacing:0.3px;-webkit-text-stroke:0.35px currentColor">ft.</div>
<svg class="a" style="left:1251px;top:424px" width="11" height="8"><path d="M0.5 0.8 H10 L5.25 6.7Z" fill="#fff"/></svg>
<svg class="a" style="left:1382px;top:424px" width="11" height="8"><path d="M0.5 0.8 H10 L5.25 6.7Z" fill="#fff"/></svg>
<div class="t" style="left:1283px;top:423.5px;font-size:11.5px;color:#c2c8e3">X</div>
<div class="a" style="left:1167px;top:459.7px;width:233px;height:32.3px;background:#8390b9"></div>
<div class="t m" style="left:1179px;top:468.5px;font-size:15px;color:#fff;letter-spacing:-0.5px">OBJECT LABEL</div>
<div class="a" style="left:1369.7px;top:469px;width:27.1px;height:14px;border-radius:7px;background:#7b96f0"></div>
<div class="a" style="left:1383.2px;top:469.3px;width:13.6px;height:13.6px;border-radius:50%;background:#d3d9ee"></div>
<div class="a" style="left:1179.3px;top:505.9px;width:217.4px;height:26.7px;border-radius:4px;background:#313b6a;overflow:hidden"><div class="a" style="left:0;top:0;width:108.7px;height:27px;background:#7b99f2"></div></div>
<div class="t" style="left:1220px;top:513px;font-size:13.5px;font-weight:bold;color:#fff">Icon</div>
<div class="t m" style="left:1329px;top:513px;font-size:13.5px;color:#c2c8e3;letter-spacing:0.2px">Text</div>
<!-- BOTTOM -->
<div class="t" style="left:213px;top:705px;font-size:14.5px;font-weight:bold;color:#55628f;letter-spacing:-0.3px">10 ft</div>
<svg class="a" style="left:250px;top:700px" width="80" height="20"><path d="M5.8 4.8 V15.4 H69.7 V4.8" fill="none" stroke="#55628f" stroke-width="2.6" stroke-linecap="round"/></svg>
<div class="a" style="left:565px;top:696.4px;width:271.4px;height:40px;background:#3b4672;border-radius:5px"></div>
<div class="t m" style="left:583px;top:707.5px;font-size:15.5px;color:#d5daee;letter-spacing:-0.2px">Floorplan1</div>
<div class="t" style="left:663.5px;top:707.5px;font-size:15.5px;color:#6e79a3">for</div>
<div class="t m" style="left:692.5px;top:707.5px;font-size:15.5px;color:#d5daee;letter-spacing:-0.2px">Testing That Event</div>
</body></html>
